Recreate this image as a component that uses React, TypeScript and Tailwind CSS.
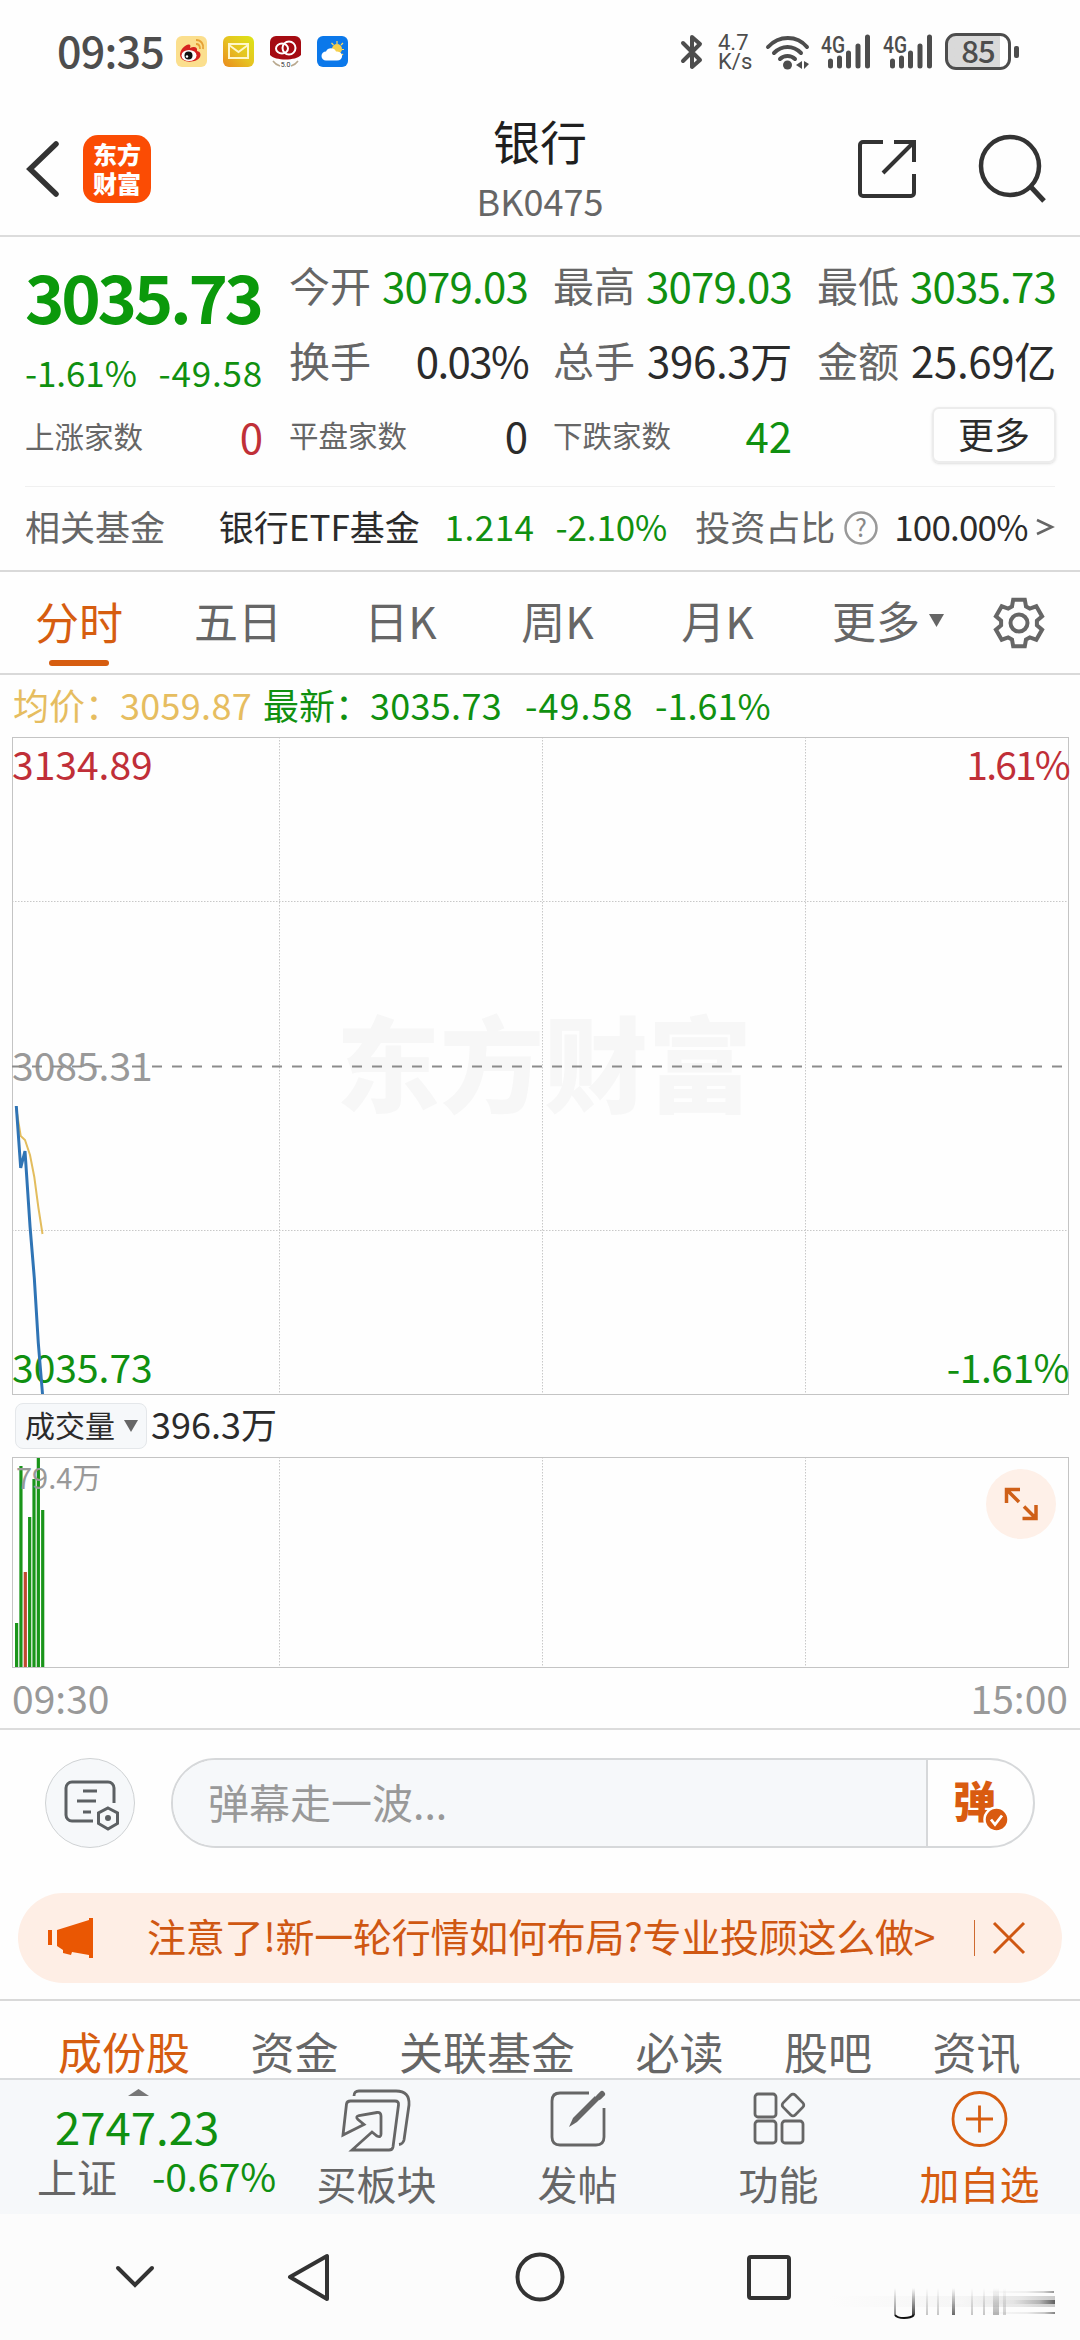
import type { ReactNode } from "react";

const stats = [
  [
    { label: "今开", value: "3079.03", tone: "text-[#109010] tracking-[-0.8px]" },
    { label: "换手", value: "0.03%", tone: "text-[#2b2b2b] tracking-[-1.6px]" },
    { label: "平盘家数", value: "0", tone: "text-[#2b2b2b]", small: true },
  ],
  [
    { label: "最高", value: "3079.03", tone: "text-[#109010] tracking-[-0.8px]" },
    { label: "总手", value: "396.3万", tone: "text-[#2b2b2b] tracking-[-0.3px]" },
    { label: "下跌家数", value: "42", tone: "text-[#109010]", small: true },
  ],
  [
    { label: "最低", value: "3035.73", tone: "text-[#109010] tracking-[-0.8px]" },
    { label: "金额", value: "25.69亿", tone: "text-[#2b2b2b] tracking-[-0.3px]" },
  ],
];

const volumes = [
  { top: 166, color: "#1a951a" },
  { top: 9, color: "#1a951a" },
  { top: 115, color: "#c0492f" },
  { top: 60, color: "#1a951a" },
  { top: 22, color: "#1a951a" },
  { top: 1, color: "#1a951a" },
  { top: 53, color: "#1a951a" },
];

// six-tooth gear outline
const gearPoints = [0, 1, 2, 3, 4, 5]
  .flatMap((i) =>
    [
      [-23, 18],
      [-14, 24],
      [14, 24],
      [23, 18],
    ].map(([offset, r]) => {
      const a = ((i * 60 - 90 + offset) * Math.PI) / 180;
      return `${(26 + r * Math.cos(a)).toFixed(1)},${(26 + r * Math.sin(a)).toFixed(1)}`;
    })
  )
  .join(" ");

function AppIcons() {
  return (
    <div className="ml-[13px] flex gap-4">
      <svg width="31" height="31" viewBox="0 0 31 31">
        <rect width="31" height="31" rx="6" fill="#fbdf8e" />
        <path d="M4 19C4 13 11 7 14 9c1 1 0 2 0 3 4-2 8-1 7 3 4 1 4 4 3 6-3 6-19 7-20-2Z" fill="#d5221f" />
        <ellipse cx="13" cy="19.5" rx="7.5" ry="5.5" fill="#fff" />
        <circle cx="12.500" cy="19.500" r="4" fill="#111" />
        <circle cx="11" cy="20.500" r="1.200" fill="#fff" />
        <path d="M20 8c3 0 4 2 4 5M20 4c5 0 8 4 7 9" fill="none" stroke="#e5a034" strokeWidth="1.800" />
      </svg>
      <svg width="31" height="31" viewBox="0 0 31 31">
        <defs>
          <linearGradient id="mail" x1="1" y1="0" x2="0" y2="1">
            <stop offset="0" stopColor="#dce615" />
            <stop offset="0.5" stopColor="#e6c322" />
            <stop offset="1" stopColor="#ea8a1d" />
          </linearGradient>
        </defs>
        <rect width="31" height="31" rx="6" fill="url(#mail)" />
        <path d="M6 8h19v14H6ZM6 9l9.500 7L25 9" fill="none" stroke="#fff7c9" strokeWidth="2" />
      </svg>
      <svg width="31" height="31" viewBox="0 0 31 31">
        <path d="M6 0h19a6 6 0 0 1 6 6v13c-5 6-26 6-31 0V6a6 6 0 0 1 6-6Z" fill="#a50b12" />
        <ellipse cx="12" cy="12.500" rx="6" ry="5" fill="none" stroke="#fff" strokeWidth="2" />
        <circle cx="19" cy="12" r="6.500" fill="none" stroke="#fff" strokeWidth="2" />
        <path d="M3 25c2 3 4 4 7 5M28 25c-2 3-4 4-7 5" fill="none" stroke="#b9a98f" strokeWidth="1.500" />
        <text x="15.500" y="30.500" textAnchor="middle" fontSize="7" fontFamily="Roboto, sans-serif" fill="#333">
          5.0
        </text>
      </svg>
      <svg width="31" height="31" viewBox="0 0 31 31">
        <rect width="31" height="31" rx="6" fill="#0b78ea" />
        <path d="M20 5v3M26 7l-2 2M14.500 7l2 2M27 13.500h-2M25 18l1 1" stroke="#ffd95c" strokeWidth="1.200" />
        <circle cx="20" cy="13" r="5" fill="#f5cf4c" />
        <path d="M9 24.500a4.500 4.500 0 0 1 0-9 5.500 5.500 0 0 1 10 0c8-1 8 9 1 9Z" fill="#fff" />
      </svg>
    </div>
  );
}

function Signal() {
  return (
    <svg className="overflow-visible" width="50" height="36" viewBox="0 0 50 36">
      <text x="0" y="18.500" fontSize="23" fontWeight="500" fontFamily="Roboto, sans-serif" textLength="24" lengthAdjust="spacingAndGlyphs" fill="#4d4d4d">
        4G
      </text>
      <path d="M9.500 27v5M18.500 24v8M27.500 19v13M37 12v20M46.500 3v29" stroke="#4d4d4d" strokeWidth="5" strokeLinecap="round" />
    </svg>
  );
}

function StatusBar() {
  return (
    <div className="flex h-[103px] items-center pl-[57px] text-[#4d4d4d]">
      <span className="w-[106px] pb-1 text-[43px] leading-none font-medium tracking-[-0.8px]">09:35</span>
      <AppIcons />
      <div className="ml-auto flex items-center pr-[61px]">
        <svg width="24" height="36" viewBox="0 0 24 36">
          <path d="M3 9l17 17-8 7V3l8 7L3 27" fill="none" stroke="#4d4d4d" strokeWidth="4" strokeLinejoin="round" strokeLinecap="round" />
        </svg>
        <div className="ml-[14px] w-[35px] font-[Roboto,sans-serif] text-[22px] leading-[19px] whitespace-nowrap">
          <div>4.7</div>
          <div>K/s</div>
        </div>
        <svg className="ml-[12px]" width="46" height="36" viewBox="0 0 46 36">
          <path d="M3 13C14 1 32 1 42 13M9 19c8-8 19-8 27 0M15 25c4-4 11-4 15 0" fill="none" stroke="#4d4d4d" strokeWidth="4" strokeLinecap="round" />
          <circle cx="22.500" cy="31" r="4.500" fill="#4d4d4d" />
          <path d="M37 27v8l-6-4ZM39 27v8l5-5Z" fill="#4d4d4d" />
        </svg>
        <div className="ml-[10px] flex gap-[12px]">
          <Signal />
          <Signal />
        </div>
        <div className="ml-[12px] flex h-[37px] w-[66px] items-center justify-center rounded-[11px] border-[3px] border-[#4d4d4d] bg-linear-to-r from-[#d9d9d9] from-87% to-white to-87% text-[31px] leading-none font-medium tracking-[-1px]">
          <span className="-mt-1">85</span>
        </div>
        <div className="ml-[3px] h-3 w-[5px] rounded-[2px] bg-[#4d4d4d]" />
      </div>
    </div>
  );
}

function Header() {
  return (
    <header className="flex h-[134px] items-center justify-between border-b-2 border-[#dcdcdc]">
      <div className="flex w-[300px] items-center pl-[26px]">
        <svg width="34" height="56" viewBox="0 0 34 56">
          <path d="M30 3 4 28l26 25" fill="none" stroke="#333" strokeWidth="5.500" strokeLinecap="round" />
        </svg>
        <div className="ml-[23px] flex size-[68px] flex-col items-center justify-center rounded-[15px] bg-[#fb4c04] pb-[3px] text-[24px] leading-[29px] font-black text-white">
          <span>东方</span>
          <span>财富</span>
        </div>
      </div>
      <div className="flex flex-col items-center">
        <h1 className="mt-[-2px] text-[47px] leading-[58px] text-[#1f1f1f]">银行</h1>
        <div className="mt-[5px] text-[36px] leading-[52px] text-[#666]">BK0475</div>
      </div>
      <div className="flex w-[300px] items-center justify-end pr-[32px]">
        <svg width="60" height="60" viewBox="0 0 60 60">
          <path d="M26 3H6a3 3 0 0 0-3 3v48a3 3 0 0 0 3 3h48a3 3 0 0 0 3-3V35M37 3h20v20M57 3 26 34" fill="none" stroke="#333" strokeWidth="4" />
        </svg>
        <svg className="ml-[61px]" width="70" height="70" viewBox="0 0 70 70">
          <circle cx="32" cy="32" r="29" fill="none" stroke="#333" strokeWidth="4.500" />
          <path d="m53 53 13 14" stroke="#333" strokeWidth="5" />
        </svg>
      </div>
    </header>
  );
}

function Quote() {
  return (
    <section className="px-[25px]">
      <div className="flex h-[250px] gap-[26px] border-b border-[#f0f0f0] pt-[10px]">
        <div className="w-[238px]">
          <div className="flex h-[95px] items-center text-[67px] leading-none font-bold tracking-[-3.3px] text-[#0b990b]">
            3035.73
          </div>
          <div className="flex h-[56px] items-center justify-between pt-[2px] text-[35px] leading-none text-[#109010]">
            <span className="tracking-[-0.1px]">-1.61%</span>
            <span className="tracking-[0.8px]">-49.58</span>
          </div>
          <div className="flex h-[75px] items-center justify-between leading-none">
            <span className="text-[29.5px] text-[#666]">上涨家数</span>
            <span className="text-[42px] text-[#c03038]">0</span>
          </div>
        </div>
        {stats.map((column, i) => (
          <div key={i} className="w-[238px]">
            {column.map((item) => (
              <div key={item.label} className="flex h-[75px] items-center justify-between leading-none whitespace-nowrap">
                <span className={item.small ? "text-[29.5px] text-[#666]" : "text-[41px] text-[#666]"}>{item.label}</span>
                <span className={`-mr-px text-[42px] ${item.tone}`}>{item.value}</span>
              </div>
            ))}
            {i === 2 && (
              <div className="flex h-[75px] items-center justify-end pt-px">
                <button className="mr-[-1px] flex h-[56px] w-[124px] items-center justify-center rounded-[7px] border-2 border-[#ececec] pb-[5px] text-[36px] leading-none text-[#2b2b2b] shadow-sm">
                  更多
                </button>
              </div>
            )}
          </div>
        ))}
      </div>
      <div className="flex h-[83px] items-center pb-[6px] text-[35px] leading-none whitespace-nowrap text-[#666]">
        <span className="w-[194px]">相关基金</span>
        <span className="w-[226px] text-[#2b2b2b]">银行ETF基金</span>
        <span className="w-[111px] tracking-[0.5px] text-[#109010]">1.214</span>
        <span className="w-[140px] tracking-[-0.1px] text-[#109010]">-2.10%</span>
        <span className="w-[149px]">投资占比</span>
        <svg className="mt-1 mr-[16px] overflow-visible" width="34" height="34" viewBox="0 0 34 34">
          <circle cx="17" cy="17" r="15.500" fill="none" stroke="#999" strokeWidth="2.500" />
          <text x="17" y="26" textAnchor="middle" fontSize="25" fill="#888">
            ?
          </text>
        </svg>
        <span className="w-[141px] tracking-[-0.8px] text-[#2b2b2b]">100.00%</span>
        <svg className="mt-1" width="20" height="20" viewBox="0 0 20 20">
          <path d="m2 2 15 7-15 7" fill="none" stroke="#666" strokeWidth="2.500" />
        </svg>
      </div>
    </section>
  );
}

function PeriodTabs() {
  return (
    <nav className="flex h-[105px] items-center border-y-2 border-[#d9d9d9] text-[44px] leading-none whitespace-nowrap text-[#666]">
      <div className="flex h-full w-[158px] flex-col items-center justify-end text-[#d65d10]">
        <span>分时</span>
        <span className="mt-[17px] mb-[7px] h-[6px] w-[60px] rounded-full bg-[#d65d10]" />
      </div>
      <div className="w-[160px] pb-[5px] text-center">五日</div>
      <div className="w-[165px] pb-[5px] text-center">日K</div>
      <div className="w-[149px] pb-[5px] text-center">周K</div>
      <div className="w-[171px] pb-[5px] text-center">月K</div>
      <div className="flex w-[190px] items-center pb-[5px] pl-[29px]">
        更多
        <svg className="ml-[9px]" width="15" height="13" viewBox="0 0 15 13">
          <path d="M0 0h15L7.500 13Z" fill="#666" />
        </svg>
      </div>
      <svg width="52" height="52" viewBox="0 0 52 52">
        <polygon points={gearPoints} fill="none" stroke="#666" strokeWidth="4" />
        <circle cx="26" cy="26" r="8.500" fill="none" stroke="#666" strokeWidth="4" />
      </svg>
    </nav>
  );
}

function PriceChart() {
  return (
    <div className="relative mx-[12px] h-[658px] text-[39px] leading-none">
      <svg className="absolute inset-0" width="1057" height="658" viewBox="0 0 1057 658">
        <text x="532" y="368" textAnchor="middle" fontSize="104" fontWeight="900" fill="#f7f7f7">
          东方财富
        </text>
        <path d="M267.500 0v657M530.500 0v657M793.500 0v657M0 164.500h1056M0 493.500h1056" stroke="#c8c8c8" strokeDasharray="1.500 1.500" />
        <rect x="0.500" y="0.500" width="1056" height="657" fill="none" stroke="#c4c4c4" />
      </svg>
      <span className="absolute top-[7px] left-0 text-[#c02f38]">3134.89</span>
      <span className="absolute top-[7px] right-[-1px] tracking-[-1.8px] text-[#c02f38]">1.61%</span>
      <span className="absolute top-[308px] left-0 text-[#999]">3085.31</span>
      <span className="absolute bottom-[9px] left-0 text-[#109010]">3035.73</span>
      <span className="absolute right-[-1px] bottom-[9px] tracking-[-0.5px] text-[#109010]">-1.61%</span>
      <svg className="absolute inset-0" width="1057" height="658" viewBox="0 0 1057 658">
        <path d="M0 329.500h1056" stroke="#8c8c8c" strokeWidth="2" strokeDasharray="10 10" />
        <path d="M4 370 8.700 399 13 403 18 418 22.300 440 26.300 470 30.500 497" fill="none" stroke="#e3bd5e" strokeWidth="2" />
        <path d="M4.300 369 8.700 431 13 414 18 489 22.300 541 26.300 606 30.500 657" fill="none" stroke="#2f74b5" strokeWidth="3" />
      </svg>
    </div>
  );
}

function VolumeChart() {
  return (
    <>
      <div className="flex h-[62px] items-center pl-[15px] leading-none text-[#2b2b2b]">
        <div className="flex h-[46px] w-[132px] items-center rounded-[8px] border border-[#e4e7ea] bg-[#f6f8fa] pb-[5px] pl-[9px] text-[30px]">
          成交量
          <svg className="mt-1 ml-[9px]" width="14" height="12" viewBox="0 0 14 12">
            <path d="M0 0h14L7 12Z" fill="#666" />
          </svg>
        </div>
        <span className="ml-1 pb-[7px] text-[36px]">396.3万</span>
      </div>
      <div className="relative mx-[12px] h-[211px]">
        <svg width="1057" height="211" viewBox="0 0 1057 211">
          <path d="M267.500 0v210M530.500 0v210M793.500 0v210" stroke="#c8c8c8" strokeDasharray="1.500 1.500" />
          <rect x="0.500" y="0.500" width="1056" height="210" fill="none" stroke="#c4c4c4" />
          {volumes.map((bar, i) => (
            <rect key={i} x={3 + i * 4.350} y={bar.top} width="3.200" height={210 - bar.top} fill={bar.color} />
          ))}
        </svg>
        <span className="absolute top-[5px] left-[4px] text-[29px] leading-none text-[#999]">79.4万</span>
        <svg className="absolute top-[12px] right-[12px]" width="70" height="70" viewBox="0 0 70 70">
          <circle cx="35" cy="35" r="35" fill="#fef0e8" />
          <path d="M20.500 34V20.500H34M21 21l12 12M36.500 49.500H50V36M50 49.500l-12-12" fill="none" stroke="#cf6018" strokeWidth="3.500" />
        </svg>
      </div>
      <div className="flex h-[62px] items-center justify-between border-b-2 border-[#dcdcdc] px-[12px] pb-[1px] text-[39px] leading-none text-[#999]">
        <span>09:30</span>
        <span>15:00</span>
      </div>
    </>
  );
}

function Danmu() {
  return (
    <section className="h-[271px] border-b-2 border-[#d9d9d9] pt-[28px]">
      <div className="flex pr-[45px] pl-[45px]">
        <div className="size-[90px] rounded-full border border-[#cfd2d4] bg-[#f6f8fa]">
          <svg width="88" height="88" viewBox="1 1 88 88">
            <path d="M48 63H27a6 6 0 0 1-6-6V30a6 6 0 0 1 6-6h36a6 6 0 0 1 6 6v15M38 33h14M32 43h19M38 54h8" fill="none" stroke="#5c6063" strokeWidth="3" />
            <path d="m63 50 9.500 5v10.500L63 71l-9.500-5.500V55Z" fill="#f6f8fa" stroke="#5c6063" strokeWidth="3" />
            <circle cx="63" cy="60" r="3" fill="#5c6063" />
          </svg>
        </div>
        <div className="ml-[36px] flex h-[90px] w-[864px] overflow-hidden rounded-full border-2 border-[#d6d8da]">
          <div className="flex flex-1 items-center bg-[#f6f8fa] pb-[4px] pl-[35px] text-[41px] leading-none text-[#999]">
            弹幕走一波...
          </div>
          <div className="relative w-[107px] border-l-2 border-[#d6d8da]">
            <span className="absolute top-[18px] left-[25px] text-[43px] leading-none font-black text-[#d95b10]">弹</span>
            <svg className="absolute top-[46px] left-[55px]" width="27" height="27" viewBox="0 0 27 27">
              <circle cx="13.500" cy="13.500" r="12" fill="#d95b10" stroke="#fff" strokeWidth="2.500" />
              <path d="m8 13.500 4 5 7-9" fill="none" stroke="#fff" strokeWidth="2.800" />
            </svg>
          </div>
        </div>
      </div>
      <div className="mx-[18px] mt-[45px] flex h-[90px] items-center rounded-full bg-[#feeee5] pl-[30px] text-[#cf5712]">
        <svg width="46" height="42" viewBox="0 0 46 42">
          <path d="M0 13h4v15H0ZM9 13l32-10V1h4v40h-4v-3l-17-3-1 3-8-2v-3l-6-4Z" fill="#ea5703" />
        </svg>
        <span className="ml-[53px] w-[790px] pb-[5px] text-[39px] leading-none tracking-[-0.25px] whitespace-nowrap">
          注意了!新一轮行情如何布局?专业投顾这么做&gt;
        </span>
        <span className="ml-[37px] h-[36px] w-px bg-[#cf6a30]" />
        <svg className="ml-[17px]" width="34" height="34" viewBox="0 0 34 34">
          <path d="m2 2 30 30M32 2 2 32" stroke="#cf5712" strokeWidth="3" />
        </svg>
      </div>
    </section>
  );
}

function ContentTabs() {
  return (
    <nav className="flex h-[77px] items-center gap-[60.500px] pt-[22px] pl-[58px] text-[44px] leading-none whitespace-nowrap text-[#666]">
      <span className="text-[#d65d10]">成份股</span>
      <span>资金</span>
      <span>关联基金</span>
      <span>必读</span>
      <span>股吧</span>
      <span>资讯</span>
    </nav>
  );
}

function Action({ label, tone, children }: { label: string; tone: string; children: ReactNode }) {
  return (
    <div className={`flex w-[201px] flex-col items-center text-[40px] leading-none ${tone}`}>
      <svg className="mt-[8px]" width="72" height="66" viewBox="0 0 72 66" fill="none" stroke="currentColor" strokeWidth="2.800">
        {children}
      </svg>
      <span className="mt-[9px]">{label}</span>
    </div>
  );
}

function ActionBar() {
  return (
    <div className="flex h-[136px] border-t-2 border-[#d9dbdd] bg-[#f6f8fa]">
      <div className="w-[276px] text-[#109010]">
        <svg className="mt-[9px] ml-[128px]" width="21" height="7" viewBox="0 0 21 7">
          <path d="M0 7 10.500 0 21 7Z" fill="#777" />
        </svg>
        <div className="mt-[7px] pl-[55px] text-[45.500px] leading-none">2747.23</div>
        <div className="mt-[7px] flex items-center justify-between pl-[37px] leading-none">
          <span className="text-[40px] text-[#666]">上证</span>
          <span className="tracking-[-0.2px] text-[39px]">-0.67%</span>
        </div>
      </div>
      <Action label="买板块" tone="text-[#666]">
        <path d="M2 47 5.500 16q.5-3 4-3H54q4 0 3.500 4L52 59q-.5 3-4 3H11l20-18 5 4q4 2 4-2V28q0-4-4-3.500l-18 3q-4 1-1 4l6 5Z" />
        <path d="M13 8q0-5 5-5h37q14 0 13 14l-5 35q-1 4-5 4.500" />
      </Action>
      <Action label="发帖" tone="text-[#666]">
        <path d="M47 5H18q-8 0-8 8v36q0 8 8 8h36q8 0 8-8V20" />
        <path d="m27 39 4-9L53 8l4 4-22 22Z" fill="currentColor" stroke="none" />
        <path d="m57 9 3-3" strokeWidth="6" strokeLinecap="round" />
      </Action>
      <Action label="功能" tone="text-[#666]">
        <rect x="12" y="6" width="21" height="23" rx="3" />
        <rect x="12" y="33" width="21" height="22" rx="3" />
        <rect x="39" y="33" width="21" height="22" rx="3" />
        <rect x="41.500" y="8.500" width="17" height="17" rx="3" transform="rotate(45 50 17)" />
      </Action>
      <Action label="加自选" tone="text-[#d65d10]">
        <circle cx="35.500" cy="31" r="26.500" />
        <path d="M22 31h27M35.500 17.500v27" />
      </Action>
    </div>
  );
}

function NavBar() {
  return (
    <div className="bg-[#fcfcfc]">
      <svg width="1080" height="126" viewBox="0 0 1080 126" fill="none" stroke="#333" strokeWidth="4">
        <defs>
          <linearGradient id="fadeX">
            <stop offset="0" stopColor="#fcfcfc" />
            <stop offset="0.6" stopColor="#e2e2e2" />
            <stop offset="0.85" stopColor="#a5a5a5" />
            <stop offset="1" stopColor="#333" />
          </linearGradient>
          <linearGradient id="fadeY" x1="0" y1="0" x2="0" y2="1">
            <stop offset="0" stopColor="#444" stopOpacity="0" />
            <stop offset="1" stopColor="#444" />
          </linearGradient>
        </defs>
        <path d="m118 54 17 17 17-17" strokeLinecap="round" />
        <path d="M290 63 327 42v43Z" strokeLinejoin="round" />
        <circle cx="540" cy="63" r="22.500" />
        <rect x="749" y="43" width="40" height="41" rx="2" />
        <g stroke="none">
          <rect x="830" y="82" width="225" height="11" fill="url(#fadeX)" opacity="0.25" />
          <rect x="950" y="86" width="105" height="4" fill="url(#fadeX)" opacity="0.7" />
          <rect x="985" y="77" width="69" height="2" fill="url(#fadeX)" opacity="0.5" />
          <rect x="985" y="98" width="70" height="2" fill="url(#fadeX)" opacity="0.6" />
          <rect x="894" y="74" width="2" height="27" fill="url(#fadeY)" opacity="0.6" />
          <rect x="912" y="74" width="3" height="27" fill="url(#fadeY)" />
          <rect x="926" y="74" width="2" height="27" fill="url(#fadeY)" opacity="0.3" />
          <rect x="937" y="74" width="2" height="27" fill="url(#fadeY)" opacity="0.3" />
          <rect x="952" y="74" width="3" height="27" fill="url(#fadeY)" opacity="0.8" />
          <rect x="971" y="74" width="2" height="27" fill="url(#fadeY)" opacity="0.3" />
          <rect x="983" y="74" width="2" height="27" fill="url(#fadeY)" opacity="0.3" />
          <rect x="993" y="74" width="6" height="27" fill="url(#fadeY)" opacity="0.4" />
          <rect x="1003" y="74" width="3" height="27" fill="url(#fadeY)" opacity="0.25" />
        </g>
        <path d="M895 101q2 3 9 3t10-3" stroke="#111" strokeWidth="2" />
      </svg>
    </div>
  );
}

export default function App() {
  return (
    <div className="h-[2340px] w-[1080px] overflow-hidden bg-[#fefefe] font-['Noto_Sans_CJK_SC',sans-serif]">
      <StatusBar />
      <Header />
      <Quote />
      <PeriodTabs />
      <div className="flex h-[62px] items-center pb-[5px] pl-[13px] text-[36px] leading-none whitespace-nowrap text-[#109010]">
        <span className="w-[107px] text-[#e6bd60]">均价：</span>
        <span className="w-[143px] tracking-[0.3px] text-[#e6bd60]">3059.87</span>
        <span className="w-[107px]">最新：</span>
        <span className="w-[155px] tracking-[0.3px]">3035.73</span>
        <span className="w-[130px] tracking-[1px]">-49.58</span>
        <span>-1.61%</span>
      </div>
      <PriceChart />
      <VolumeChart />
      <Danmu />
      <ContentTabs />
      <ActionBar />
      <NavBar />
    </div>
  );
}
